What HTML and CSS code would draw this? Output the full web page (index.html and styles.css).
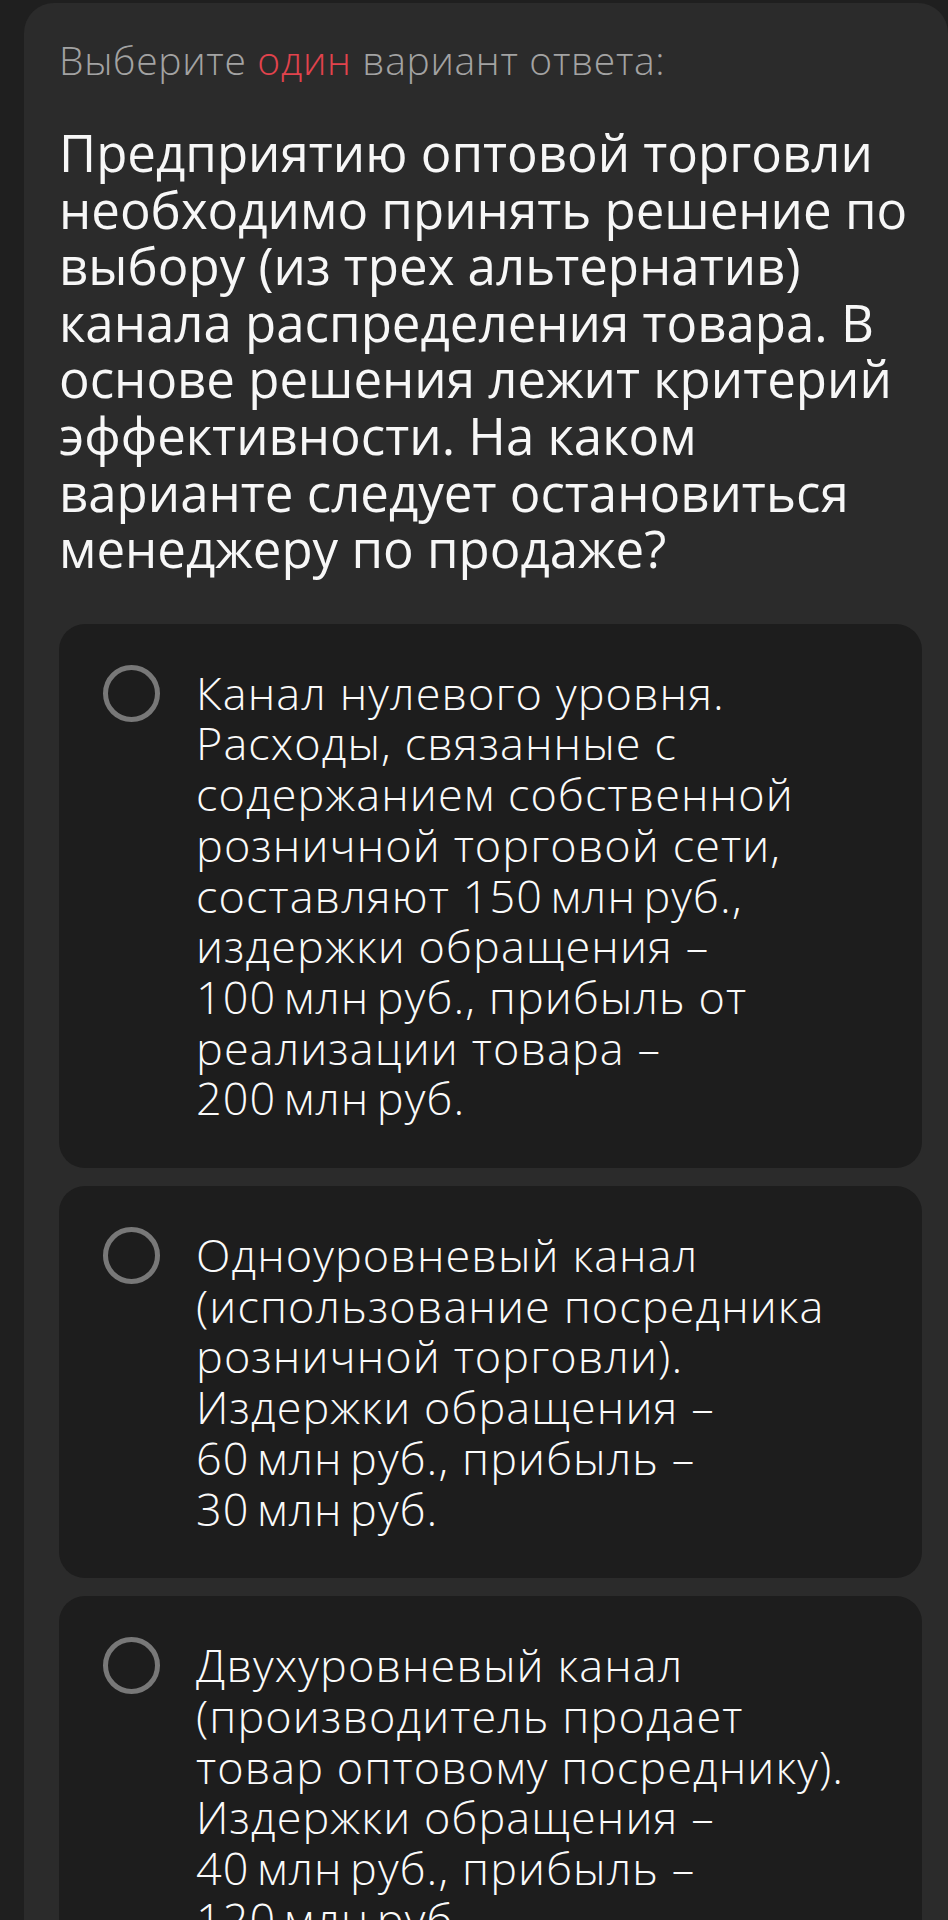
FILE: index.html
```html
<!DOCTYPE html>
<html>
  <head>
    <meta charset="UTF-8">
    <title>Тест</title>
    <link rel="stylesheet" href="styles.css">
  </head>

  <body>
    <div class="card">
      <div class="hint">Выберите <span class="accent">один</span> вариант ответа:</div>

      <div class="question">
        Предприятию оптовой торговли<br>
        необходимо принять решение по<br>
        выбору (из трех альтернатив)<br>
        канала распределения товара. В<br>
        основе решения лежит критерий<br>
        эффективности. На каком<br>
        варианте следует остановиться<br>
        менеджеру по продаже?
      </div>

      <div class="options">
        <div class="option">
          <span class="radio"></span>
          <div class="option-text">
            Канал нулевого уровня.<br>
            Расходы, связанные с<br>
            содержанием собственной<br>
            розничной торговой сети,<br>
            составляют <span class="nb">150 млн руб.</span>,<br>
            издержки обращения –<br>
            <span class="nb">100 млн руб.</span>, прибыль от<br>
            реализации товара –<br>
            <span class="nb">200 млн руб.</span>
          </div>
        </div>

        <div class="option">
          <span class="radio"></span>
          <div class="option-text">
            Одноуровневый канал<br>
            (использование посредника<br>
            розничной торговли).<br>
            Издержки обращения –<br>
            <span class="nb">60 млн руб.</span>, прибыль –<br>
            <span class="nb">30 млн руб.</span>
          </div>
        </div>

        <div class="option">
          <span class="radio"></span>
          <div class="option-text">
            Двухуровневый канал<br>
            (производитель продает<br>
            товар оптовому посреднику).<br>
            Издержки обращения –<br>
            <span class="nb">40 млн руб.</span>, прибыль –<br>
            <span class="nb">120 млн руб.</span>
          </div>
        </div>
      </div>
    </div>
  </body>
</html>
```

FILE: styles.css
```css
html, body {
  margin: 0;
  background-color: #1f1f1f;
  overflow: hidden;
}

body {
  padding: 3px 0 0 24px;
  font-family: 'Open Sans', sans-serif;
}

.card {
  background-color: #2b2b2b;
  border-radius: 30px 30px 0 0;
  padding: 35px 26px 40px 35px;
  min-height: 1900px;
}

.hint {
  font-size: 39px;
  font-weight: 300;
  letter-spacing: 0.7px;
  line-height: 44px;
  color: #a3a3a3;
}

.accent {
  color: #e2434d;
}

.question {
  margin-top: 42px;
  font-size: 51px;
  font-weight: 500;
  line-height: 56.6px;
  color: #f7f7f7;
  white-space: nowrap;
}

.options {
  display: flex;
  flex-direction: column;
  gap: 18px;
  margin-top: 47px;
}

.option {
  display: flex;
  align-items: flex-start;
  gap: 36px;
  background-color: #1d1d1d;
  border-radius: 26px;
  padding: 44px 40px 44px 44px;
}

.radio {
  flex: none;
  width: 57px;
  height: 57px;
  margin-top: -3px;
  box-sizing: border-box;
  border: 5px solid #787878;
  border-radius: 50%;
}

.option-text {
  font-size: 45px;
  font-weight: 300;
  letter-spacing: 1.1px;
  line-height: 50.7px;
  color: #fafafa;
  white-space: nowrap;
}

.nb {
  word-spacing: -0.12em;
}
```
